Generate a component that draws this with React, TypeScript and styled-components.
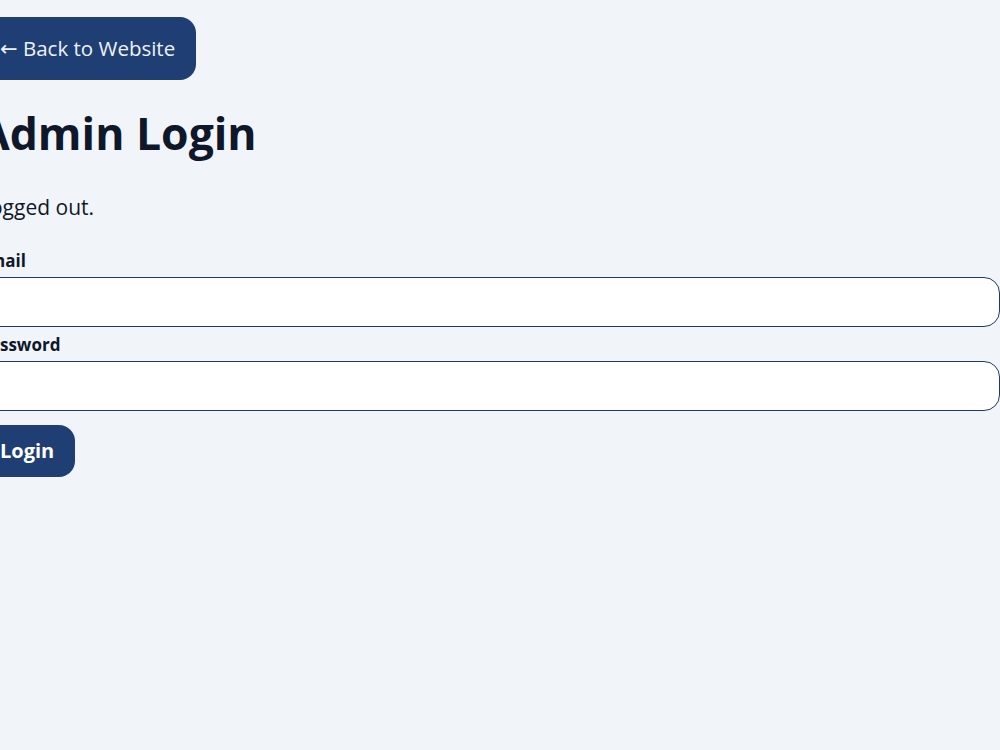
import React from "react";
import styled, { createGlobalStyle } from "styled-components";

const Global = createGlobalStyle`
  html, body { margin: 0; padding: 0; background: #f1f5fa; }
  body { font-family: "Open Sans", "Noto Sans", sans-serif; color: #0f172a; overflow: hidden; }
`;

const Page = styled.main`
  display: flex;
  flex-direction: column;
  align-items: flex-start;
  margin-left: -21px;
  width: 1021px;
  padding-top: 17px;
  box-sizing: border-box;
`;

const BackLink = styled.a`
  display: inline-block;
  background: #1f3f74;
  color: #eef2f8;
  font-size: 20.5px;
  line-height: 31px;
  height: 31px;
  padding: 16px 21px;
  border-radius: 16px;
  text-decoration: none;
`;

const Arrow = styled.span`
  font-family: "DejaVu Sans", sans-serif;
  font-size: 21px;
  line-height: 0;
`;

const Title = styled.h1`
  margin: 27px 0 0;
  font-size: 44.5px;
  line-height: 52px;
  font-weight: 700;
  color: #0f172a;
`;

const Status = styled.p`
  margin: 34px 0 0;
  font-size: 21px;
  line-height: 28px;
  color: #111827;
`;

const Form = styled.form`
  display: flex;
  flex-direction: column;
  align-items: flex-start;
  width: 100%;
  margin-top: 29px;
`;

const Label = styled.label<{ $first?: boolean }>`
  font-size: 17px;
  line-height: 22px;
  font-weight: 700;
  color: #0f172a;
  margin-top: ${(p) => (p.$first ? "0" : "7px")};
  margin-bottom: 5px;
`;

const Input = styled.input`
  box-sizing: border-box;
  width: 100%;
  height: 50px;
  border: 1px solid #1e3a66;
  border-radius: 16px;
  background: #ffffff;
  font-family: inherit;
  font-size: 18px;
  padding: 0 16px;
  outline: none;
`;

const Submit = styled.button`
  margin-top: 14px;
  background: #1f3f74;
  color: #ffffff;
  border: none;
  border-radius: 16px;
  font-family: inherit;
  font-size: 20px;
  font-weight: 700;
  line-height: 26px;
  padding: 13px 21px;
  cursor: pointer;
`;

export default function App() {
  return (
    <>
      <Global />
      <Page>
        <BackLink href="#">
          <Arrow>←</Arrow> Back to Website
        </BackLink>
        <Title>Admin Login</Title>
        <Status>Logged out.</Status>
        <Form onSubmit={(e) => e.preventDefault()}>
          <Label $first htmlFor="email">Email</Label>
          <Input id="email" type="email" />
          <Label htmlFor="password">Password</Label>
          <Input id="password" type="password" />
          <Submit type="submit">Login</Submit>
        </Form>
      </Page>
    </>
  );
}
